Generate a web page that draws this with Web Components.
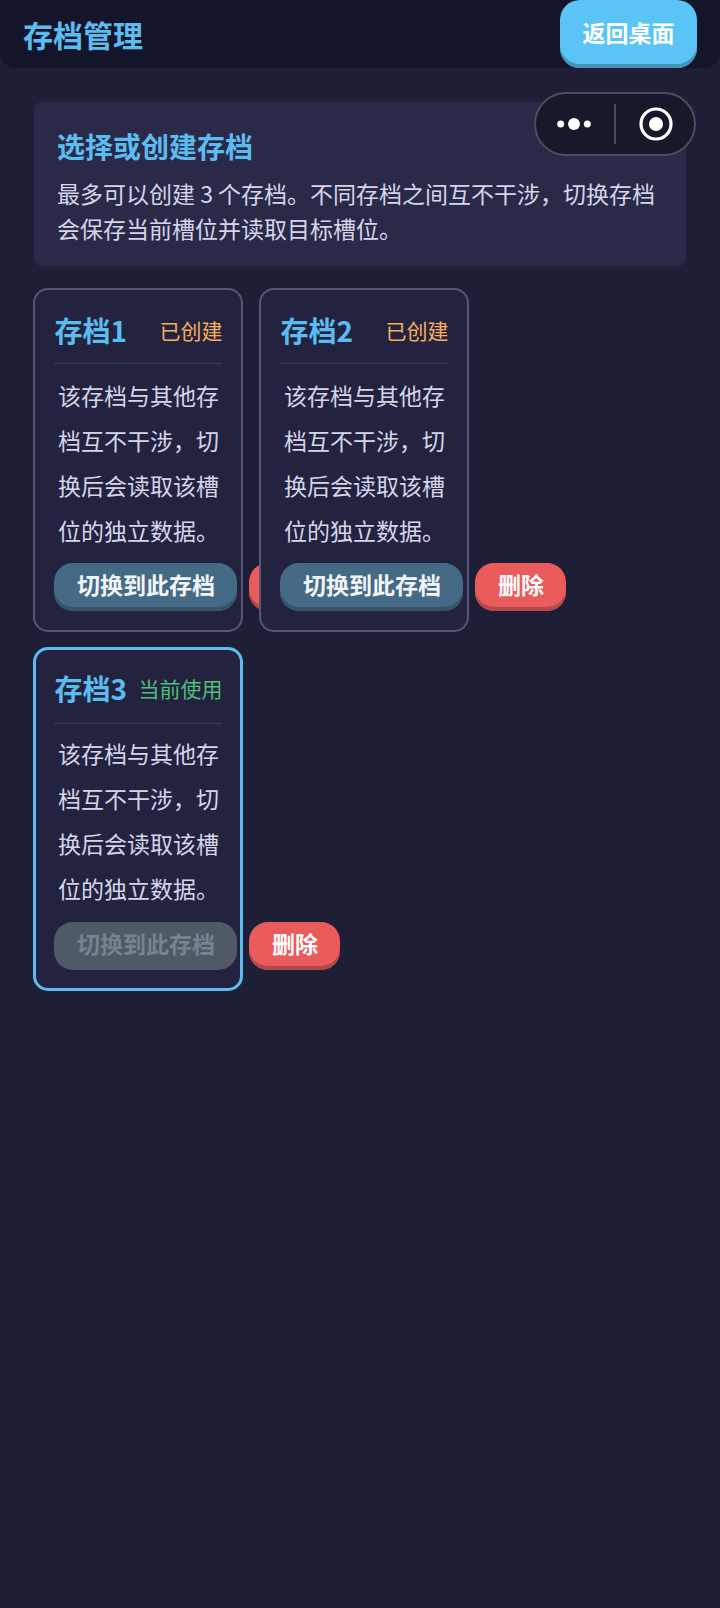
<!DOCTYPE html>
<html lang="zh"><head><meta charset="utf-8"><style>
html,body{margin:0;padding:0;background:#1e1e36;}
body{width:720px;height:1608px;overflow:hidden;position:relative;font-family:"Noto Sans CJK SC","Noto Sans",sans-serif;}
</style></head><body>
<app-header title-text="存档管理" action="返回桌面"></app-header>
<wx-capsule></wx-capsule>
<save-page>
<intro-card heading="选择或创建存档">最多可以创建 3 个存档。不同存档之间互不干涉，切换存档会保存当前槽位并读取目标槽位。</intro-card>
<slot-grid>
<save-card name="存档1" status="已创建"></save-card>
<save-card name="存档2" status="已创建"></save-card>
<save-card name="存档3" status="当前使用" current></save-card>
</slot-grid>
</save-page>
<script>
const def=(n,fn)=>customElements.define(n,class extends HTMLElement{connectedCallback(){if(!this.shadowRoot){this.attachShadow({mode:'open'}).innerHTML=fn(this);}}});
def('app-header',e=>`<style>
:host{display:flex;justify-content:space-between;align-items:stretch;height:68px;background:#14142a;border-radius:0 0 16px 16px;padding:0 23px;box-sizing:border-box}
h1{margin:0;font-size:30px;font-weight:700;color:#5bbcf0;line-height:68px}
button{all:unset;box-sizing:border-box;width:137px;height:68px;padding-bottom:4.5px;text-align:center;background:#5ac4f6;border-radius:20px;box-shadow:inset 0 -4px 0 #4594b8;color:#fff;font-size:23px;font-weight:700;line-height:36px}
</style><h1>${e.getAttribute('title-text')}</h1><button>${e.getAttribute('action')}</button>`);
def('wx-capsule',()=>`<style>
:host{position:absolute;left:534px;top:92px;width:162px;height:64px;box-sizing:border-box;display:flex;align-items:center;background:#18182b;border:2px solid #4c4c60;border-radius:32px}
.l{flex:none;width:78px;box-sizing:border-box;padding-right:2px;display:flex;justify-content:center;align-items:center}
.r{flex:1;padding-left:2.5px;display:flex;justify-content:center;align-items:center}
.d{width:1.5px;height:40px;background:#4c4c60}
svg{display:block}
</style><div class="l"><svg width="36" height="16" viewBox="0 0 36 16"><circle cx="4.7" cy="8" r="3.5" fill="#fff"/><circle cx="18" cy="8" r="6" fill="#fff"/><circle cx="31.3" cy="8" r="3.5" fill="#fff"/></svg></div><div class="d"></div><div class="r"><svg width="36" height="36" viewBox="0 0 36 36"><circle cx="18" cy="18" r="15" fill="none" stroke="#fff" stroke-width="3.2"/><circle cx="18" cy="18" r="7" fill="#fff"/></svg></div>`);
def('save-page',()=>`<style>:host{display:block;padding:34px 33.4px 0}</style><slot></slot>`);
def('intro-card',e=>`<style>
:host{display:block;box-sizing:border-box;height:164px;margin:0 .6px;background:#2a2a48;border-radius:8px;padding:23px 23px 0}
h2{margin:0 0 8.5px;font-size:28px;font-weight:700;color:#5bbcf0;line-height:42px}
p{margin:0;font-size:23px;color:#d5d5ea;line-height:35px}
</style><h2>${e.getAttribute('heading')}</h2><p><slot></slot></p>`);
def('slot-grid',()=>`<style>:host{display:flex;flex-wrap:wrap;gap:15px 16px;margin-top:22.3px;align-items:flex-start}</style><slot></slot>`);
def('save-card',e=>{const cur=e.hasAttribute('current');return `<style>
:host{display:block;box-sizing:border-box;width:210px;height:344px;background:#23233f;border:${cur?'3px solid #5bbcf0':'2px solid #565678'};border-radius:15px;padding:${cur?'16px 18px':'17.5px 19px'};position:relative}
.h{display:flex;justify-content:space-between;align-items:center;height:44px;padding-bottom:${cur?13:11}px;border-bottom:1px solid #3c3c58}
.n{font-size:28px;font-weight:700;color:#5bbcf0;line-height:44px}
.s{font-size:21px;color:${cur?'#4fbf78':'#f5ae5c'};line-height:44px}
p{margin:${cur?'7px 0 11px':'9px 0 10px'};padding:0 0 0 3.7px;font-size:23px;color:#d5d5ea;line-height:45px}
.a{display:flex;gap:12px;width:max-content}
button{all:unset;box-sizing:border-box;height:48px;padding:0 22.5px 6px;border-radius:19px;font-size:23px;font-weight:700;line-height:36px;color:#f2f6fa;white-space:nowrap}
.sw{background:#456a86;box-shadow:inset 0 -4px 0 #375367}
.sw.off{background:#4f5a66;box-shadow:none;color:#78838e}
.del{background:#ea5b5b;box-shadow:inset 0 -4px 0 #b04a4c;color:#fff}
</style><div class="h"><span class="n">${e.getAttribute('name')}</span><span class="s">${e.getAttribute('status')}</span></div><p>该存档与其他存档互不干涉，切换后会读取该槽位的独立数据。</p><div class="a"><button class="sw${cur?' off':''}">切换到此存档</button><button class="del">删除</button></div>`});
</script>
</body></html>
